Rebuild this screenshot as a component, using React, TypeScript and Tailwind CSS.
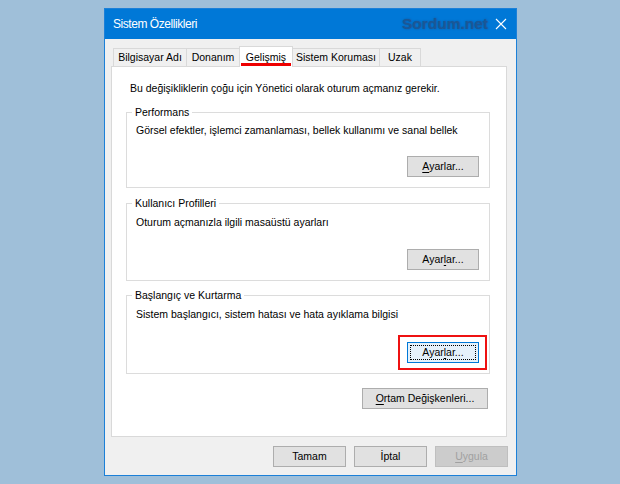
import type { ReactNode } from 'react';

const TABS = [
  { label: 'Bilgisayar Adı', width: 'w-[74px]' },
  { label: 'Donanım', width: 'w-[54px]' },
  { label: 'Gelişmiş', width: 'w-[54px]', active: true },
  { label: 'Sistem Koruması', width: 'w-[88px]' },
  { label: 'Uzak', width: 'w-[42px]' },
];

function Mn({ children }: { children: ReactNode }) {
  return <span className="underline underline-offset-[2px]">{children}</span>;
}

function DlgButton({
  children,
  className = '',
  disabled,
  focused,
}: {
  children: ReactNode;
  className?: string;
  disabled?: boolean;
  focused?: boolean;
}) {
  const look = disabled
    ? 'border-[#bfbfbf] bg-[#cccccc] text-[#a0a0a0]'
    : focused
      ? 'border-[#0078d7] bg-[#e5f1fb] text-black'
      : 'border-[#adadad] bg-[#e1e1e1] text-black';
  return (
    <button
      type="button"
      className={`relative flex h-[21px] items-center justify-center border leading-[13px] ${look} ${className}`}
    >
      {focused && <span className="absolute inset-[2px] border border-dotted border-black" />}
      {children}
    </button>
  );
}

function Group({
  title,
  text,
  className = '',
  button,
}: {
  title: string;
  text: string;
  className?: string;
  button: ReactNode;
}) {
  return (
    <div
      className={`relative ml-[14px] flex w-[364px] flex-col justify-between border border-[#dcdcdc] pr-[10px] pb-[10px] pl-[9px] ${className}`}
    >
      <span className="absolute -top-[7px] left-[5px] bg-white px-[3px] leading-[13px]">{title}</span>
      <div className="leading-[13px]">{text}</div>
      <div className="flex justify-end">{button}</div>
    </div>
  );
}

export default function App() {
  return (
    <div className="h-[484px] w-[620px] overflow-hidden bg-[#9fbfd9] pt-[8px] pl-[104px] font-['Liberation_Sans','Noto_Sans',Arial,sans-serif] text-[10.5px] text-black">
      <div className="flex h-[468px] w-[413px] flex-col border border-[#1c80d8] bg-[#f0f0f0]">
        {/* title bar */}
        <div className="flex h-[30px] items-center bg-[#0078d7] pr-[9px] pl-[8px] text-white">
          <span className="text-[12px] tracking-[-0.45px]">Sistem Özellikleri</span>
          <span className="ml-auto text-[15.5px] font-bold text-[#1b5796] [text-shadow:0_0_2px_rgba(20,70,130,0.7)]">
            Sordum.net
          </span>
          <svg width="12" height="12" viewBox="0 0 12 12" className="ml-[7px]">
            <path d="M1 1 L11 11 M11 1 L1 11" stroke="white" strokeWidth="1.1" />
          </svg>
        </div>

        <div className="flex flex-col px-[6px] pt-[7px]">
          {/* tabs */}
          <div className="flex h-[20px] items-end pl-[2px]">
            {TABS.map((t, i) => (
              <div
                key={t.label}
                className={`relative flex items-center justify-center border border-b-0 border-[#d9d9d9] ${t.width} ${
                  i > 0 ? '-ml-px' : ''
                } ${t.active ? 'z-10 -mb-px h-[21px] bg-white' : 'h-[18px] bg-[#f0f0f0]'}`}
              >
                <span className="leading-[13px]">{t.label}</span>
                {t.active && <span className="absolute right-[1px] bottom-[1px] left-[1px] h-[3px] bg-[#ee0000]" />}
              </div>
            ))}
          </div>

          {/* page */}
          <div className="flex h-[371px] w-[396px] flex-col border border-[#d9d9d9] bg-white">
            <div className="mt-[15px] pl-[18px] leading-[13px]">
              Bu değişikliklerin çoğu için Yönetici olarak oturum açmanız gerekir.
            </div>
            <Group
              className="mt-[17px] h-[76px] pt-[11px]"
              title="Performans"
              text="Görsel efektler, işlemci zamanlaması, bellek kullanımı ve sanal bellek"
              button={
                <DlgButton className="w-[72px]">
                  <Mn>A</Mn>yarlar...
                </DlgButton>
              }
            />
            <Group
              className="mt-[15px] h-[78px] pt-[12px]"
              title="Kullanıcı Profilleri"
              text="Oturum açmanızla ilgili masaüstü ayarları"
              button={
                <DlgButton className="w-[72px]">
                  Ayar<Mn>l</Mn>ar...
                </DlgButton>
              }
            />
            <Group
              className="mt-[14px] h-[79px] pt-[12px]"
              title="Başlangıç ve Kurtarma"
              text="Sistem başlangıcı, sistem hatası ve hata ayıklama bilgisi"
              button={
                <div className="relative">
                  <DlgButton focused className="w-[72px]">
                    Ayar<Mn>l</Mn>ar...
                  </DlgButton>
                  <span className="absolute -top-[7px] -right-[8px] -bottom-[7px] -left-[9px] border-2 border-[#ee1111]" />
                </div>
              }
            />
            <div className="mt-[14px] flex justify-end pr-[18px]">
              <DlgButton className="w-[126px]">
                <Mn>O</Mn>rtam Değişkenleri...
              </DlgButton>
            </div>
          </div>

          {/* dialog buttons */}
          <div className="mt-[9px] flex justify-end gap-[8px] pr-[2px]">
            <DlgButton className="w-[73px]">Tamam</DlgButton>
            <DlgButton className="w-[73px]">İptal</DlgButton>
            <DlgButton disabled className="w-[73px]">
              <Mn>U</Mn>ygula
            </DlgButton>
          </div>
        </div>
      </div>
    </div>
  );
}
